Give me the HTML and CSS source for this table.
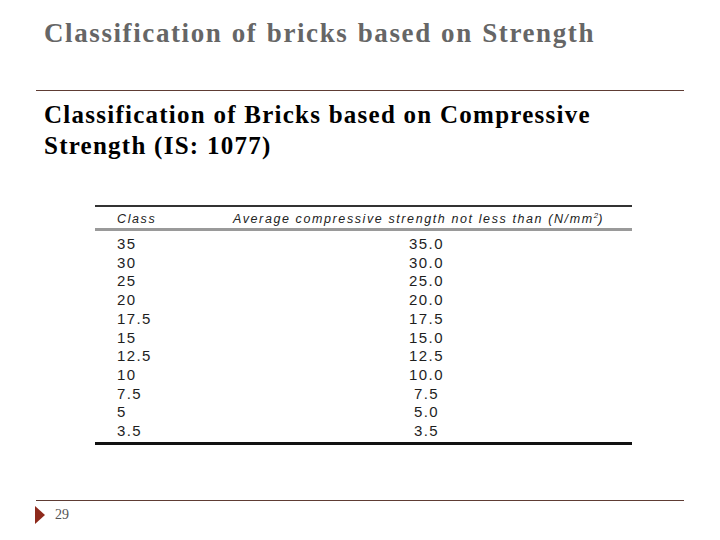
FILE: index.html
```html
<!DOCTYPE html>
<html>
<head>
<meta charset="utf-8">
<link rel="stylesheet" href="styles.css">
</head>
<body>
<div class="slide">
  <h1 class="title">Classification of bricks based on Strength</h1>
  <div class="rule"></div>
  <p class="subtitle">Classification of Bricks based on Compressive<br>Strength (IS: 1077)</p>
  <table class="data">
    <thead>
      <tr><th class="c1">Class</th><th class="c2">Average compressive strength not less than (N/mm<sup>2</sup>)</th></tr>
    </thead>
    <tbody>
      <tr><td class="c1">35</td><td class="c2">35.0</td></tr>
      <tr><td class="c1">30</td><td class="c2">30.0</td></tr>
      <tr><td class="c1">25</td><td class="c2">25.0</td></tr>
      <tr><td class="c1">20</td><td class="c2">20.0</td></tr>
      <tr><td class="c1">17.5</td><td class="c2">17.5</td></tr>
      <tr><td class="c1">15</td><td class="c2">15.0</td></tr>
      <tr><td class="c1">12.5</td><td class="c2">12.5</td></tr>
      <tr><td class="c1">10</td><td class="c2">10.0</td></tr>
      <tr><td class="c1">7.5</td><td class="c2">7.5</td></tr>
      <tr><td class="c1">5</td><td class="c2">5.0</td></tr>
      <tr><td class="c1">3.5</td><td class="c2">3.5</td></tr>
    </tbody>
  </table>
  <div class="footer">
    <div class="rule"></div>
    <div class="foot-row">
      <svg class="arrow" width="10" height="18" viewBox="0 0 10 18"><polygon points="0,0 10,9 0,18" fill="#8e2a1c"/></svg>
      <span class="page">29</span>
    </div>
  </div>
</div>
</body>
</html>
```
FILE: styles.css
```css
html, body {
  margin: 0;
  padding: 0;
  background: #fff;
}
.slide {
  width: 720px;
  height: 540px;
  display: flex;
  flex-direction: column;
  box-sizing: border-box;
}
.title {
  margin: 16px 0 0 44px;
  font-family: "Liberation Serif", serif;
  font-weight: bold;
  font-size: 27px;
  line-height: 34px;
  letter-spacing: 1.6px;
  word-spacing: 1px;
  color: #666;
  white-space: nowrap;
}
.rule {
  margin: 0 36px;
  height: 1px;
  background: #5e3c34;
}
.slide > .rule {
  margin-top: 40px;
}
.subtitle {
  margin: 8px 0 0 44px;
  font-family: "Liberation Serif", serif;
  font-weight: bold;
  font-size: 25px;
  line-height: 31px;
  letter-spacing: 1.25px;
  color: #000;
  white-space: nowrap;
}
.data {
  margin: 44px 0 0 95px;
  width: 537px;
  border-collapse: collapse;
  font-family: "Liberation Sans", Arial, sans-serif;
  color: #1e1e1e;
  border-top: 2px solid #333;
  border-bottom: 3px solid #111;
}
.data th {
  font-style: italic;
  font-weight: normal;
  font-size: 12.5px;
  line-height: 18px;
  letter-spacing: 1.6px;
  padding: 3px 0 0 0;
  text-align: left;
  border-bottom: 3px solid #9a9a9a;
  color: #222;
  white-space: nowrap;
}
.data th.c1 { padding-left: 22px; width: 116px; }
.data th sup { font-size: 8px; line-height: 0; letter-spacing: 0; }
.data td {
  font-size: 15px;
  line-height: 18.7px;
  letter-spacing: 1.4px;
  padding: 0;
}
.data tbody tr:first-child td { padding-top: 4px; }
.data tbody tr:last-child td { padding-bottom: 1px; }
.data td.c1 { padding-left: 22px; }
.data td.c2 { text-align: center; padding-right: 12px; }
.footer {
  margin-top: auto;
  padding-bottom: 16px;
}
.foot-row {
  display: flex;
  align-items: center;
  margin: 5px 0 0 35px;
  gap: 10px;
}
.arrow { display: block; }
.page {
  font-family: "Liberation Serif", serif;
  font-size: 14px;
  color: #555;
}
```
